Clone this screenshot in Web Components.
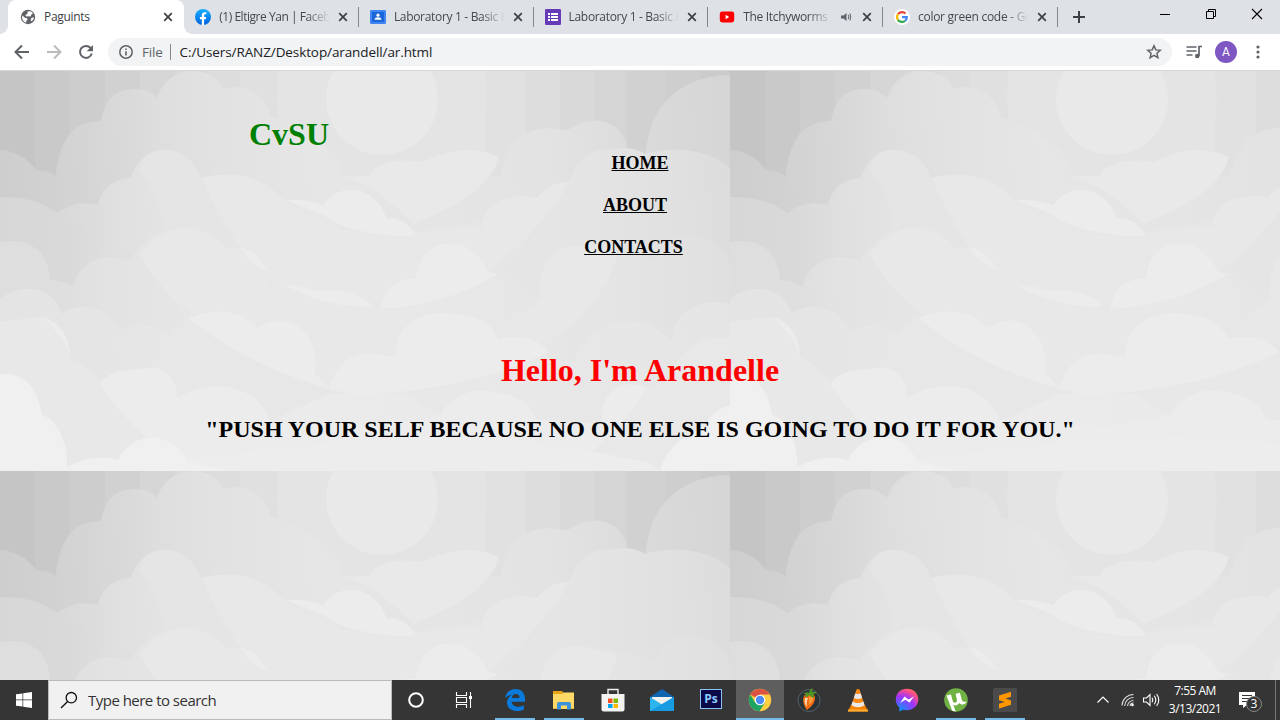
<!DOCTYPE html>
<html lang="en">
<head>
<meta charset="utf-8">
<title>Paguints</title>
<style>
html,body{margin:0;height:100%;overflow:hidden}
body{font-family:"Open Sans","Noto Sans",sans-serif}
</style>
</head>
<body>
<desktop-screen></desktop-screen>
<script>
const ICONS = {
globe:['16','<circle cx="8" cy="8" r="7.200" fill="#5f6368"/><path d="M2.400 6.400 5 8.800l2 .4.6 1.500-1.300 1-.2 2C3.600 13.200 2 11 2 8zM7.500 2.400l3.300-.2 2.200 2-1.500 1.400-1 2-2.200-.4-2 .4L5.300 6l2.200-1.200z" fill="#fff"/><path d="M11 9.400l2.500-1.300.2 1.800-1.900 2.400-1.100-.6z" fill="#fff"/>'],
facebook:['16','<defs><linearGradient id="f" x2="0" y2="1"><stop stop-color="#19afff"/><stop offset="1" stop-color="#0062e0"/></linearGradient></defs><circle cx="8" cy="8" r="8" fill="url(#f)"/><path d="M6.8 15.9v-5.6H4.9V8h1.9V6.3c0-2 1.1-3.1 2.9-3.1l1.6.1v2h-1c-.9 0-1.2.5-1.2 1.2V8h2.1l-.4 2.3H9.1v5.6z" fill="#fff"/>'],
classroom:['16','<rect y="1" width="16" height="14" rx="1.2" fill="#4285f4"/><path d="M2 3h12v10H2z" fill="#1a66d6"/><circle cx="8" cy="6.2" r="1.6" fill="#fff"/><path d="M4.5 10.8c0-3.3 7-3.3 7 0z" fill="#fff"/>'],
forms:['16','<rect width="16" height="16" rx="1.2" fill="#673ab7"/><path d="M3 4h2v2H3zm3 0h7v2H6zM3 7h2v2H3zm3 0h7v2H6zm-3 3h2v2H3zm3 0h7v2H6z" fill="#fff"/>'],
youtube:['16','<rect x=".8" y="2.5" width="14.4" height="11" rx="2.4" fill="#f00"/><path d="M6.6 5.8v4.4l3.6-2.2z" fill="#fff"/>'],
google:['16','<circle cx="8" cy="8" r="8" fill="#fff"/><g fill="none" stroke-width="2.2"><path d="M4 5.1A4.9 4.9 0 0 1 11.5 4.5" stroke="#ea4335"/><path d="M4 10.8A4.9 4.9 0 0 1 4 5.2" stroke="#fbbc05"/><path d="M3.9 10.8a4.9 4.9 0 0 0 7.2 1" stroke="#34a853"/><path d="M8 8.2h4.8a4.9 4.9 0 0 1-1.6 3.5" stroke="#4285f4"/></g>'],
close:['16','<path d="m4.2 4.2 7.6 7.6m0-7.6-7.6 7.6" stroke="#3c4043" stroke-width="1.7"/>'],
audio:['16','<path d="M3 6.5h2.5L8.500 4v8L5.500 9.500H3z" fill="#5f6368"/><path d="M10.200 5.700q1.500 2.300 0 4.600M12 4.500q1.500 3.500 0 7" stroke="#5f6368" fill="none"/>'],
plus:['16','<path d="M8 2v12M2 8h12" stroke="#3c4043" stroke-width="2"/>'],
min:['16','<path d="M3 8.500h10" stroke="#000"/>'],
restore:['16','<path d="M3.500 5.500h7v7h-7zM5.500 5.500v-2h7v7h-2" stroke="#000" fill="none"/>'],
exit:['16','<path d="m3 3 10 10m0-10L3 13" stroke="#000" stroke-width="1.100"/>'],
back:['16','<path d="M15 8H2M8 1.500 1.500 8 8 14.500" stroke="#5f6368" stroke-width="2" fill="none"/>'],
forward:['16','<path d="M1 8h13M8 1.500 14.500 8 8 14.500" stroke="#babcbe" stroke-width="2" fill="none"/>'],
reload:['16','<path d="M12.600 4A6 6 0 1 0 13.800 9.500" stroke="#5f6368" stroke-width="2" fill="none"/><path d="M15 1v6.300H8.700z" fill="#5f6368"/>'],
info:['16','<circle cx="8" cy="8" r="6.200" stroke="#5f6368" stroke-width="1.500" fill="none"/><path d="M7.200 7.200h1.600v4.200H7.200zm0-2.800h1.600V6H7.200z" fill="#5f6368"/>'],
star:['16','<path d="m8 1.800 1.800 4.100 4.500.4-3.400 3 1 4.400L8 11.400l-3.900 2.300 1-4.400-3.400-3 4.500-.4z" stroke="#5f6368" stroke-width="1.500" fill="none"/>'],
queue:['18','<path d="M1.500 4h10M1.500 8h10M1.500 12h6M14 13V3.500h3" stroke="#5f6368" stroke-width="1.700" fill="none"/><circle cx="12.300" cy="13" r="2.300" fill="#5f6368"/>'],
dots:['16','<g fill="#5f6368"><circle cx="8" cy="3" r="1.600"/><circle cx="8" cy="8" r="1.600"/><circle cx="8" cy="13" r="1.600"/></g>'],
windows:['16','<path d="M0 2.300 6.500 1.400v6.200H0zM7.200 1.300 16 0v7.600H7.200zM0 8.300h6.500v6.300L0 13.700zm7.200 0H16V16l-8.800-1.300z" fill="#fff"/>'],
search:['18','<circle cx="11.300" cy="6.700" r="5.200" stroke="#111" stroke-width="1.300" fill="none"/><path d="M7.600 10.400 1 17" stroke="#111" stroke-width="1.400"/>'],
cortana:['24','<circle cx="12" cy="12" r="6.800" stroke="#fff" stroke-width="2" fill="none"/>'],
taskview:['24','<path d="M4.500 4v3.500h10V4M4.500 20v-3.500h10V20M4.500 9.500h10v5h-10zM18.500 4v16" stroke="#fff" stroke-width="1.100" fill="none"/><path d="M17 8h3v3h-3z" fill="#fff"/>'],
edge:['24','<path d="M2 10.500C3 4 7.500 1 12.500 1 19 1 22 5.800 22 11v2.800H8.700c.2 3.500 3.400 5 6.500 5 2.200 0 4-.6 5.600-1.500v4.300c-2 1.100-4.300 1.500-6.800 1.500C8 23.100 4 19.600 4 14.500c0-3.400 1.800-6 4.800-7.500C6 7.200 3.500 8.300 2 10.500zm6.900-.6h7.600c0-2.500-1.300-4-3.600-4S9.200 7.500 8.900 9.900z" fill="#0a7bdc"/>'],
explorer:['24','<path d="M1 3h9l1.500 2H22v16H1z" fill="#e8a317"/><path d="M1 6h9l1.500-1.500H22V21H1z" fill="#ffd968"/><path d="M5 21.500v-5.500q0-2 2-2h10q2 0 2 2v5.500h-4v-4H9v4z" fill="#3c94dc"/><path d="M1 20h4v1H1zm18 0h3v1h-3z" fill="#f4b733"/>'],
store:['24','<path d="M7 7V1.500h10V7" stroke="#eee" stroke-width="1.400" fill="none"/><path d="M.5 6h23v15.500q0 2-2 2h-19q-2 0-2-2z" fill="#f3f3f3"/><path d="M7 10.500h4.500V15H7z" fill="#f25022"/><path d="M12.500 10.500H17V15h-4.500z" fill="#7fba00"/><path d="M7 16h4.500v4H7z" fill="#00a4ef"/><path d="M12.500 16H17v4h-4.500z" fill="#ffb900"/>'],
mail:['24','<path d="M0 9 12 1l12 8v14H0z" fill="#0f64b0"/><path d="M2 9h20v9H2z" fill="#f1f1f1"/><path d="m0 9 12 7.500L24 9v14H0z" fill="#2fb5ee"/><path d="M0 23 24 9v14z" fill="#179ce2"/>'],
chrome:['24','<circle cx="12" cy="12" r="11.200" fill="#ffcd40"/><path d="M12 12 2.300 6.400A11.200 11.200 0 0 1 21.700 6.600H12z" fill="#dd5144"/><path d="M2.300 6.400A11.200 11.200 0 0 0 11.500 23.200L17 14.500 12 12 7.300 14.700z" fill="#1da462"/><circle cx="12" cy="12" r="5.300" fill="#fff"/><circle cx="12" cy="12" r="4.200" fill="#4c8bf5"/>'],
fruity:['24','<circle cx="12" cy="12.500" r="11" fill="#2b3236" stroke="#56616a"/><path d="M7 8c3-4 11-3 11 2 0 5-4 9-8 12-3-3-5-10-3-14z" fill="#f26d12"/><path d="M12 9c3-1 5 0 4 3-1 2-3 4-4 5z" fill="#ff9c3a"/><path d="M8 10c-1 3 0 7 2 9-.5-3-.5-6 1-9z" fill="#ffd9ae"/><path d="M6 6q4-3 6-1 1-5 4-4.500L14.500 4q5-1 5.500 1-3 0-4 2 2 2 0 3-3-2-4-3-2 3-4 2 1-2 1-3-2 0-3 0z" fill="#4f9628"/>'],
vlc:['24','<path d="m5 17-3 6.500h20L19 17z" fill="#f38400"/><path d="M10.500 1.500q1.500-1 3 0l5.200 16q-6.700 5-13.400 0z" fill="#ff8a13"/><path d="m9.300 5.500-1.500 4.600q4.200 2 8.400 0l-1.500-4.600q-2.700 1.200-5.400 0zM6.500 13.500l-1.100 3.800q6.600 4 13.200 0l-1.100-3.800q-5.500 3-11 0z" fill="#e8e8e8"/><path d="M2 21.500h20v2H2z" fill="#ffac30"/>'],
messenger:['24','<defs><radialGradient id="m" cx=".2" cy="1" r="1.100"><stop stop-color="#09f"/><stop offset=".6" stop-color="#a033ff"/><stop offset=".9" stop-color="#ff5280"/><stop offset="1" stop-color="#ff7061"/></radialGradient></defs><path d="M12 .8C5.500.8.800 5.500.800 11.600c0 3.200 1.300 6 3.500 7.900V23.500l3.800-1.700c7.400 2 15.200-2.700 15.200-10.200C23.300 5.500 18.500.800 12 .800z" fill="url(#m)"/><path d="m5 15 4.500-6.500 4 3 5.500-3.200-4.500 6.500-4-3z" fill="#fff"/>'],
utorrent:['24','<circle cx="12" cy="12" r="11.800" fill="#70b244"/><path d="M2.500 7.500 7 6.500l1.800 6.800c.7 2.400 4.600 1.700 4.200-1L11.600 5.700l4.300-1 2 7.300c.5 1.600 2 2.300 4.800 1.500-.9 2.700-4.900 4.300-7.500 1.500-1.300 2.600-4.300 3-6 1.800l2.600 6.800-3.600-.8z" fill="#fff"/>'],
sublime:['24','<rect width="24" height="24" rx="1.500" fill="#4b4b4b"/><path d="M6 7.600 18 3.800v5L12.300 10.600 18 12.400v4.400L6 20.600v-4.800l5.700-1.800L6 12.200z" fill="#ff9800"/>'],
chevron:['16','<path d="m2.500 10.500 5.500-5.500 5.500 5.500" stroke="#fff" stroke-width="1.200" fill="none"/>'],
wifi:['16','<g stroke="#ddd" fill="none" stroke-width="1.100"><path d="M2 13.500A11.500 11.500 0 0 1 13.500 2.500M4.700 14A8.700 8.700 0 0 1 13.500 5.500M7.500 14a6 6 0 0 1 6-5.500M10 14a3.500 3.500 0 0 1 3.500-3"/></g><circle cx="12.500" cy="13" r="1.300" fill="#fff"/>'],
volume:['18','<path d="M1.500 7h3L8 3.500v11L4.500 11h-3zM10 6.700q1.500 2.300 0 4.600M12.300 4.800q3 4.200 0 8.400M14.600 3q4.400 6 0 12" stroke="#fff" fill="none" stroke-width="1.100"/>']
};

class AppIcon extends HTMLElement{
  connectedCallback(){
    const [box,art]=ICONS[this.getAttribute('name')], s=this.getAttribute('size')||16;
    this.attachShadow({mode:'open'}).innerHTML=`<style>:host{display:block;flex:none;width:${s}px;height:${s}px}svg{display:block;width:100%;height:100%}</style><svg viewBox="0 0 ${box} ${box}">${art}</svg>`;
  }
}
customElements.define('app-icon',AppIcon);

class BrowserTab extends HTMLElement{
  connectedCallback(){
    const on=this.hasAttribute('active'), au=this.hasAttribute('audio');
    this.attachShadow({mode:'open'}).innerHTML=`<style>
    :host{display:flex;align-items:center;box-sizing:border-box;width:174.700px;height:34px;padding:0 7px 0 12px;position:relative;font-size:12px;color:#45494d;flex:none}
    :host([active]){background:#fff;border-radius:8px 8px 0 0;margin-right:-.5px;padding-right:8px;width:175.700px;color:#3c4043}
    :host([active])::before,:host([active])::after{content:"";position:absolute;bottom:0;width:8px;height:8px}
    :host([active])::before{left:-8px;background:radial-gradient(circle at 0 0,transparent 7.500px,#fff 8px)}
    :host([active])::after{right:-8px;background:radial-gradient(circle at 100% 0,transparent 7.500px,#fff 8px)}
    :host(:not([active]))::after{content:"";position:absolute;right:-1px;top:7px;width:1px;height:20px;background:#84878b}
    .t{margin-left:8px;flex:1;white-space:nowrap;overflow:hidden;line-height:18px;letter-spacing:var(--ls,-.32px);${on?'':'-webkit-mask-image:linear-gradient(90deg,#000 calc(100% - 24px),transparent);mask-image:linear-gradient(90deg,#000 calc(100% - 24px),transparent);'}}
    .c{margin-left:5px}.a{margin-left:6px}
    </style><app-icon name="${this.getAttribute('icon')}"></app-icon><span class="t"><slot></slot></span>${au?'<app-icon class="a" name="audio"></app-icon>':''}<app-icon class="c" name="close"></app-icon>`;
  }
}
customElements.define('browser-tab',BrowserTab);

class TabStrip extends HTMLElement{
  connectedCallback(){
    this.attachShadow({mode:'open'}).innerHTML=`<style>:host{display:flex;height:34px;background:#dee1e6;padding-left:8px;align-items:center}
    .plus{margin-left:14.500px}.w{display:flex;margin-left:auto;gap:30px;padding:0 15px 6px 0}</style>
    <browser-tab active icon="globe">Paguints</browser-tab>
    <browser-tab icon="facebook" style="--ls:-.46px">(1) Eltigre Yan | Facebook</browser-tab>
    <browser-tab icon="classroom">Laboratory 1 - Basic HTML</browser-tab>
    <browser-tab icon="forms">Laboratory 1 - Basic HTML</browser-tab>
    <browser-tab icon="youtube" audio>The Itchyworms x Ben</browser-tab>
    <browser-tab icon="google" style="--ls:-.26px">color green code - Google</browser-tab>
    <app-icon class="plus" name="plus"></app-icon>
    <div class="w"><app-icon name="min"></app-icon><app-icon name="restore"></app-icon><app-icon name="exit"></app-icon></div>`;
  }
}
customElements.define('tab-strip',TabStrip);

class ToolBar extends HTMLElement{
  connectedCallback(){
    this.attachShadow({mode:'open'}).innerHTML=`<style>
    :host{display:flex;box-sizing:border-box;height:37px;background:#fff;border-bottom:1px solid #d5d6d9;align-items:center;padding:0 14px;gap:16px}
    .o{flex:1;display:flex;align-items:center;height:28px;border-radius:14px;background:#f1f3f4;margin:0 -3px 0 -2px;padding:0 10px}
    .f{margin-left:8px;color:#5f6368;letter-spacing:-.2px;font-size:13.500px}.s{width:1px;height:16px;background:#85898d;margin:0 9px 0 7px}
    .u{flex:1;color:#202124;font-size:13.500px;letter-spacing:-.1px}
    .a{width:22px;height:22px;border-radius:50%;background:#7e57c2;color:#fff;font:12px/22px Roboto,sans-serif;text-align:center;margin-left:-4px}
    </style><app-icon name="back"></app-icon><app-icon name="forward"></app-icon><app-icon name="reload"></app-icon>
    <div class="o"><app-icon name="info"></app-icon><span class="f">File</span><i class="s"></i><span class="u">C:/Users/RANZ/Desktop/arandell/ar.html</span><app-icon name="star"></app-icon></div>
    <app-icon name="queue" size="18"></app-icon><div class="a">A</div><app-icon name="dots" style="margin-left:-3px"></app-icon>`;
  }
}
customElements.define('tool-bar',ToolBar);

class CloudWallpaper extends HTMLElement{
  connectedCallback(){
    const sky=[[0,'c5'],[35,'c9'],[70,'cd'],[105,'d1'],[140,'d6'],[175,'da'],[210,'dd'],[240,'e0'],[278,'e4'],[485,'e1'],[526,'dd'],[560,'d9'],[595,'d5'],[627,'d1'],[665,'ce'],[700,'cb']]
      .map(([x,c])=>`<path d="M${x} 0h${740-x}v400h-${740-x}z" fill="#${c.repeat(3)}"/>`).join('');
    const grad=(id,stops)=>`<linearGradient id="${id}" gradientUnits="userSpaceOnUse" x1="0" y1="40" x2="730" y2="0">${stops.map(([o,c])=>`<stop offset="${o}" stop-color="#${c.repeat(3)}"/>`).join('')}</linearGradient>`;
    this.attachShadow({mode:'open'}).innerHTML=`<style>:host{display:block}svg{display:block;width:100%;height:100%}</style>
    <svg><defs>
    ${grad('g1',[[0,'ce'],[.06,'d1'],[.13,'d6'],[.22,'de'],[.3,'e2'],[.42,'e6'],[.6,'e5'],[.74,'e3'],[.83,'de'],[.9,'d9'],[1,'d5']])}
    ${grad('g2',[[0,'d7'],[.08,'d9'],[.14,'df'],[.22,'e4'],[.33,'e7'],[.6,'e7'],[.8,'e4'],[.92,'e0'],[1,'dc']])}
    ${grad('g3',[[0,'de'],[.08,'df'],[.14,'e3'],[.24,'e6'],[.4,'e8'],[.6,'e8'],[.82,'e5'],[1,'df']])}
    ${grad('g4',[[0,'e4'],[.1,'e5'],[.2,'e7'],[.7,'e8'],[.9,'e6'],[1,'e5']])}
    ${grad('g5',[[0,'e8'],[.18,'e8'],[.4,'eb'],[.7,'e9'],[1,'e8']])}
    <pattern id="sky" width="730" height="400" patternUnits="userSpaceOnUse">
    ${sky}
    <circle cx="382" cy="28" r="105" fill="#e4e4e4"/><circle cx="382" cy="28" r="56" fill="#e9e9e9"/>
    <path d="M0 79Q22 80 36 99Q48 99 55 105V400H0z" fill="url(#g1)"/>
    <path d="M55 145C52 70 70 51 101 50C105 26 118 18 134 18Q150 18 157 27C165 5 180 0 195 0C210 1 220 9 224 18Q246 11 262 28Q270 38 270 46C300 55 345 80 343 105H500Q510 60 545 57L568 59C590 42 624 48 627 78L646 84C648 35 680 5 730 4V400H55z" fill="url(#g1)"/>
    <path d="M0 126Q38 126 57 142Q76 128 98 134C102 115 115 108 131 107C140 82 155 78 167 79C186 80 197 95 201 107C239 98 265 108 284 129C320 143 350 160 420 160L484 150C487 132 507 125 537 127Q550 113 569 111C579 80 600 77 615 78Q635 75 645 83C674 73 712 80 730 97V400H0z" fill="url(#g2)"/>
    <path d="M340 106Q340 105 370 105C376 91 400 87 423 91Q465 70 499 86C489 125 430 145 414 153C395 135 370 110 340 106z" fill="#e9e9e9"/>
    <path d="M140 100Q142 80 165 79C188 81 198 96 201 110Q214 140 239 177L225 176Q180 142 165 160Q158 120 140 100z" fill="#e5e5e5"/>
    <path d="M285 129L323 144Q346 163 410 166L416 163Q402 145 387 148C377 117 342 108 323 134Q300 127 285 129" fill="#ececec"/>
    <path d="M201 107C239 98 265 108 284 129C320 153 350 167 416 165V230H290L237 172Q219 145 201 107z" fill="#e8e8e8"/>
    <path d="M483 157C478 132 515 120 537 127Q550 110 569 111Q545 155 490 200L415 185L420 165Q450 155 483 157z" fill="#e8e8e8"/>
    <path d="M0 171C25 167 48 176 50 209Q65 210 73 216C80 188 105 181 130 190Q140 170 165 159C187 151 213 159 225 177Q243 173 260 190Q269 200 268 216L380 238L500 203L540 230C535 183 562 170 585 175Q609 175 620 184Q643 181 656 191C663 163 692 157 713 171Q727 180 730 195V400H0z" fill="url(#g3)"/>
    <path d="M140 182C170 145 210 154 225 177C249 174 270 192 267 216Q305 235 373 237V285L270 260L192 243Q155 215 140 182z" fill="#e8e8e8"/>
    <path d="M240 177Q255 177 268 200Q252 195 240 177zM285 214Q300 213 318 220Q350 215 374 235Q330 239 285 214zM380 238Q385 208 416 207C419 172 447 170 463 174Q481 184 488 201L498 203Q445 235 380 238z" fill="#ececec"/>
    <path d="M541 228C535 185 562 171 585 176L618 184Q600 240 545 274L500 260z" fill="#e8e8e8"/>
    <path d="M0 228C22 211 52 215 62 243C80 228 113 238 119 260Q143 248 168 262C190 233 237 235 257 256C285 242 318 264 315 290L329 318Q340 278 378 283L395 286C396 247 435 239 453 243Q489 244 498 268Q532 260 550 287L575 293C585 249 640 234 672 271C672 241 702 225 730 233V400H0z" fill="url(#g4)"/>
    <path d="M188 247C216 235 244 240 257 257C280 243 300 249 311 271Q318 285 315 302L330 318Q247 295 188 247zM329 318Q340 278 378 283L395 286C395 245 435 239 453 243Q489 244 498 268Q532 260 549 281Q470 320 355 324z" fill="#ececec"/>
    <path d="M0 251Q25 247 43 246Q67 252 70 286Q89 296 101 312C112 297 135 298 156 296Q177 303 177 327C213 304 255 316 270 350L330 323H405L440 345C450 315 505 308 535 347L602 355C600 313 628 308 647 317Q655 318 668 309C681 272 707 265 730 266V400H0z" fill="url(#g5)"/>
    <path d="M43 246Q69 254 70 286Q64 266 43 246zM100 314C108 296 135 300 156 296Q177 303 177 327C213 304 259 315 270 350L380 355L440 345Q460 315 490 320Q529 325 536 348L602 353C600 313 628 308 647 317Q630 350 570 400H190Q140 370 100 314z" fill="#ececec"/>
    <path d="M0 303C27 300 39 322 42 344C58 348 69 375 67 396Q92 382 118 389C133 358 175 360 187 390L230 400H0zM660 400Q667 370 706 355Q712 337 730 335V400z" fill="#f0f0f0"/>
    <path d="M187 390l43 10h430l-10-8Q500 360 420 366Q300 370 187 390z" fill="#ededed"/>
    </pattern></defs><rect width="100%" height="100%" fill="url(#sky)"/></svg>`;
  }
}
customElements.define('cloud-wallpaper',CloudWallpaper);

class WebPage extends HTMLElement{
  connectedCallback(){
    this.attachShadow({mode:'open'}).innerHTML=`<style>
    :host{display:grid;flex:1;min-height:0;overflow:hidden;font-family:"Liberation Serif",serif;color:#000}
    :host>*{grid-area:1/1;min-height:0}
    cloud-wallpaper,main{grid-area:1/1;min-height:0}
    main{position:relative;text-align:center;font-weight:bold}
    h1,h2,ul{margin:0;padding:0}
    .logo{font-size:32px;line-height:36px;color:green;text-align:left;padding:45px 0 1px 249px}
    ul{list-style:none;font-size:18px;line-height:21px}
    li{height:42px}a{color:#000;text-decoration:underline}
    .hi{font-size:32px;line-height:36px;color:red;padding-top:73px}
    .q{font-size:24px;line-height:28px;padding-top:27px}
    </style><cloud-wallpaper></cloud-wallpaper>
    <main><h1 class="logo">CvSU</h1>
    <ul><li><a>HOME</a></li><li style="padding-right:10px"><a>ABOUT</a></li><li style="padding-right:13px"><a>CONTACTS</a></li></ul>
    <h1 class="hi">Hello, I'm Arandelle</h1><h2 class="q">"PUSH YOUR SELF BECAUSE NO ONE ELSE IS GOING TO DO IT FOR YOU."</h2></main>`;
  }
}
customElements.define('web-page',WebPage);

class TaskButton extends HTMLElement{
  connectedCallback(){
    this.attachShadow({mode:'open'}).innerHTML=`<style>:host{display:flex;flex:none;width:48px;height:40px;align-items:center;justify-content:center;position:relative}
    :host([open])::after{content:"";position:absolute;bottom:0;left:4px;right:4px;height:2px;background:#76b9ed}
    :host([current]){background:#5e5e5e}:host([current])::after{left:0;right:0}</style><slot></slot>`;
  }
}
customElements.define('task-button',TaskButton);

class TaskBar extends HTMLElement{
  connectedCallback(){
    const app=(n,a='')=>`<task-button ${a}><app-icon name="${n}" size="24"></app-icon></task-button>`;
    this.attachShadow({mode:'open'}).innerHTML=`<style>
    :host{display:flex;height:40px;background:#353535;color:#fff;align-items:center}
    .s{display:flex;align-items:center;box-sizing:border-box;width:344px;height:40px;background:#f1f1f1;border:1px solid #bbb;padding-left:11px;font-size:15px;color:#333;letter-spacing:-.52px}
    .s span{margin-left:10px}
    .apps{display:flex;gap:1px;margin-left:3px}
    .ps{box-sizing:border-box;width:22px;height:20px;border:1.500px solid #8bc3f5;background:#0c0949;color:#8bcaff;font:bold 12px/17px "Open Sans",sans-serif;text-align:center;margin-bottom:3px}
    .tray{margin-left:auto;display:flex;align-items:center;height:40px}
    .clock{width:64px;text-align:center;font-size:12px;line-height:18px;letter-spacing:-.5px;margin:0 11px 0 3px}
    .n{position:relative;width:24px;height:24px;margin-right:13px}
    .n svg{display:block}
    .n b{position:absolute;left:8px;top:8px;width:14px;height:14px;border:1px solid #888;border-radius:50%;background:#353535;font:12px/14px "Open Sans",sans-serif;text-align:center}
    .end{width:4px;height:40px;border-left:1px solid #777}
    </style>
    <task-button><app-icon name="windows"></app-icon></task-button>
    <div class="s"><app-icon name="search" size="18"></app-icon><span>Type here to search</span></div>
    ${app('cortana')}${app('taskview')}
    <div class="apps">${app('edge','open')}${app('explorer','open')}${app('store')}${app('mail')}<task-button><div class="ps">Ps</div></task-button>${app('chrome','open current')}${app('fruity')}${app('vlc')}${app('messenger')}${app('utorrent','open')}${app('sublime','open')}</div>
    <div class="tray"><app-icon name="chevron"></app-icon><app-icon name="wifi" style="margin-left:9px"></app-icon><app-icon name="volume" size="18" style="margin-left:6px"></app-icon>
    <div class="clock">7:55 AM<br>3/13/2021</div>
    <div class="n"><svg width="24" height="24"><path d="M1 4h16v13H9l-4 3v-3H1z" fill="#fff"/><path d="M4 7.500h10M4 10.500h10M4 13.500h10" stroke="#353535"/></svg><b>3</b></div><i class="end"></i></div>`;
  }
}
customElements.define('task-bar',TaskBar);

class DesktopScreen extends HTMLElement{
  connectedCallback(){
    this.attachShadow({mode:'open'}).innerHTML=`<style>:host{display:flex;flex-direction:column;width:1280px;height:720px;overflow:hidden}</style><tab-strip></tab-strip><tool-bar></tool-bar><web-page></web-page><task-bar></task-bar>`;
  }
}
customElements.define('desktop-screen',DesktopScreen);
</script>
</body>
</html>
